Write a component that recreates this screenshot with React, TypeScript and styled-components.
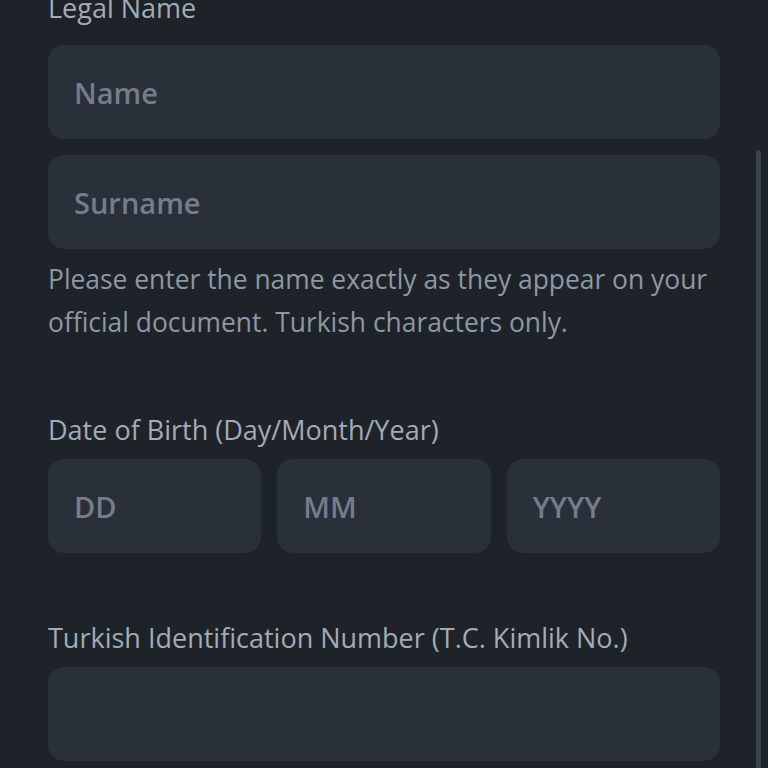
import { createGlobalStyle } from "styled-components"
import styled from "styled-components"

const COLORS = {
  bg: '#1e2329',
  input: '#2a3039',
  label: '#a3abb6',
  helper: '#8e97a3',
  placeholder: '#747d89',
  scroll: '#3b424c',
}

const GlobalStyle = createGlobalStyle`
  html, body {
    margin: 0;
    padding: 0;
    background: ${COLORS.bg};
  }
  * { box-sizing: border-box; }
  body {
    font-family: "Open Sans", "Noto Sans", sans-serif;
  }
`

const Screen = styled.div`
  position: relative;
  width: 768px;
  height: 768px;
  overflow: hidden;
  background: ${COLORS.bg};
`

const Form = styled.div`
  display: flex;
  flex-direction: column;
  padding: 0 48px;
  margin-top: -10px;
`

const Label = styled.div<{ $gap?: number }>`
  font-size: 27px;
  line-height: 36px;
  color: ${COLORS.label};
  margin-bottom: ${p => p.$gap ?? 11}px;
`

const Field = styled.div`
  height: 94px;
  border-radius: 16px;
  background: ${COLORS.input};
  display: flex;
  align-items: center;
  padding: 0 26px;
  font-size: 29px;
  font-weight: 600;
  color: ${COLORS.placeholder};
`

const Stack = styled.div`
  display: flex;
  flex-direction: column;
  gap: 16px;
`

const Helper = styled.p`
  margin: 9px 0 0;
  font-size: 26.4px;
  line-height: 43px;
  color: ${COLORS.helper};
`

const Section = styled.div<{ $top: number }>`
  margin-top: ${p => p.$top}px;
`

const DateRow = styled.div`
  display: grid;
  grid-template-columns: repeat(3, 1fr);
  gap: 16px;
`

const ScrollThumb = styled.div`
  position: absolute;
  right: 7px;
  top: 150px;
  bottom: 0;
  width: 5px;
  border-radius: 3px 3px 0 0;
  background: ${COLORS.scroll};
`

export default function App() {
  return (
    <Screen>
      <GlobalStyle />
      <Form>
        <Label $gap={19}>Legal Name</Label>
        <Stack>
          <Field>Name</Field>
          <Field>Surname</Field>
        </Stack>
        <Helper>
          Please enter the name exactly as they appear on your official document. Turkish characters only.
        </Helper>

        <Section $top={68}>
          <Label>Date of Birth (Day/Month/Year)</Label>
          <DateRow>
            <Field>DD</Field>
            <Field>MM</Field>
            <Field>YYYY</Field>
          </DateRow>
        </Section>

        <Section $top={67}>
          <Label>Turkish Identification Number (T.C. Kimlik No.)</Label>
          <Field />
        </Section>
      </Form>
      <ScrollThumb />
    </Screen>
  )
}
